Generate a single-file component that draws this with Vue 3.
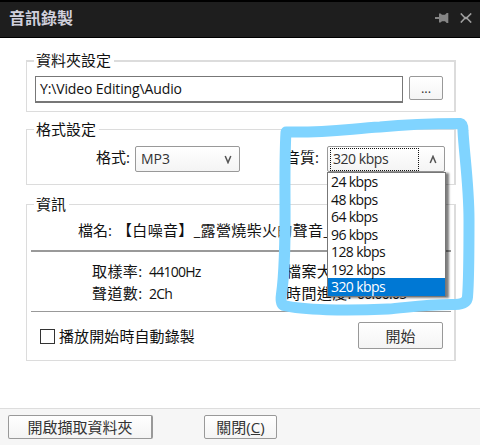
<script setup>
import { ref } from 'vue'

const rates = ['24 kbps', '48 kbps', '64 kbps', '96 kbps', '128 kbps', '192 kbps', '320 kbps']
const selected = ref('320 kbps')
const autoRecord = ref(false)
</script>

<template>
  <div class="window">
    <header class="titlebar">
      <h1>音訊錄製</h1>
      <svg class="pin" width="14" height="12" viewBox="0 0 14 12">
        <path d="M0 5H4V1.500H5.500L7 2.800H10L11.700 1H13.300V11H11.700L10 9.200H7L5.500 10.500H4V7H0z" fill="#858585" />
      </svg>
      <svg class="close" width="12" height="10" viewBox="0 0 12 10">
        <path d="M.8 .4L4.6 4.4H7.2L11.2 .4M.8 9.6L4.6 5.4H7.2L11.2 9.6" fill="none" stroke="#a0a0a0" stroke-width="1.5" />
      </svg>
    </header>

    <main class="body">
      <section class="group folder">
        <h2><span>資料夾設定</span></h2>
        <div class="folder-row">
          <div class="path"><span class="latin">Y:\Video Editing\Audio</span></div>
          <button class="btn browse">...</button>
        </div>
      </section>

      <section class="group format">
        <h2><span>格式設定</span></h2>
        <div class="format-row">
          <label class="flabel">格式:</label>
          <div class="btn select">
            <span>MP3</span>
            <svg width="8" height="9" viewBox="0 0 8 9"><path d="M1.2 1L4 7.6L6.8 1" fill="none" stroke="#555" stroke-width="1.5" /></svg>
          </div>
          <label class="qlabel">音質:</label>
          <div class="btn select quality">
            <span class="focus">{{ selected }}</span>
            <svg width="8" height="9" viewBox="0 0 8 9"><path d="M1.2 8L4 1.4L6.8 8" fill="none" stroke="#555" stroke-width="1.5" /></svg>
            <ul class="popup">
              <li v-for="r in rates" :key="r" :class="{ on: r === selected }">{{ r }}</li>
            </ul>
          </div>
        </div>
      </section>

      <section class="group info">
        <h2><span>資訊</span></h2>
        <div class="file"><span>檔名:</span><span class="name">【白噪音】_露營燒柴火的聲音_</span></div>
        <div class="stats">
          <span class="key">取樣率:</span><span class="val">44100Hz</span>
          <span class="key">檔案大小:</span><span class="val"></span>
          <span class="key">聲道數:</span><span class="val">2Ch</span>
          <span class="key">時間進度:</span><span class="val">00:00:05</span>
        </div>
        <div class="start-row">
          <span class="check" :class="{ ticked: autoRecord }"></span>
          <span class="check-text">播放開始時自動錄製</span>
          <button class="btn start">開始</button>
        </div>
      </section>
    </main>

    <footer class="footer">
      <button class="btn open">開啟擷取資料夾</button>
      <button class="btn shut">關閉(<u>C</u>)</button>
    </footer>

    <svg class="marker" width="480" height="445" viewBox="0 0 480 445">
      <path d="M286 132C325 133 348 129 380 127C410 124 440 123.500 460 123.500Q463 124 463 131C464 152 469 185 469 220C469 250 469 280 467.500 297Q467 304 455 304.500C425 304 405 308 388 309C345 311 302 310 284 305.500Q280 304 281.500 294C288 250 283 180 286 132z" />
    </svg>
  </div>
</template>

<style>
body { margin: 0; background: #fff; overflow: hidden; }
</style>

<style scoped>
* { box-sizing: border-box; }
.window {
  position: relative;
  display: flex;
  flex-direction: column;
  width: 480px;
  height: 445px;
  background: #fff;
  color: #111;
  font: 15px/20px "Open Sans", "Noto Sans CJK TC", sans-serif;
  white-space: nowrap;
}
h1, h2, ul { margin: 0; padding: 0; font-weight: 400; list-style: none; }
.titlebar {
  display: flex;
  align-items: center;
  height: 38px;
  padding: 0 8px 3px 9px;
  background: #1e1e1e;
  border-top: 2px solid #000;
  border-bottom: 1px solid #000;
}
h1 { flex: 1; font-size: 16px; line-height: 20px; font-weight: 700; color: #d0d0dc; }
.pin { margin-right: 11px; }
.body { flex: 1; padding: 22px 24px 0 26px; }
.group { border: 1px solid #dcdcdc; border-right-width: 2px; }
h2 { height: 20px; margin-top: -11px; padding-left: 7px; font-size: 15px; line-height: 20px; }
h2 span { display: inline-block; padding: 0 3px 0 2px; background: #fff; }
.folder { height: 52px; border-top-width: 2px; }
.folder h2 { line-height: 18px; }
.folder-row { display: flex; padding: 5px 11px 0 8px; }
.path {
  width: 369px;
  height: 27px;
  padding: 0 4px;
  line-height: 23px;
  border: 1px solid #777;
  border-bottom-width: 2px;
  margin-right: 6px;
}
.latin { font-size: 14px; letter-spacing: -0.130px; }
.btn {
  display: block;
  padding: 0;
  font: inherit;
  color: #333;
  text-align: center;
  background: linear-gradient(#fff, #f4f4f4);
  border: 1px solid #999;
  border-radius: 2px;
}
.browse { width: 34px; height: 24px; line-height: 20px; font-size: 13px; }
.format { height: 56px; margin-top: 17px; }
.format-row { display: flex; padding: 7px 0 0 69px; }
.flabel { width: 39px; line-height: 23px; }
.qlabel { width: 43px; margin-left: 44px; padding-left: 1px; line-height: 23px; }
.select {
  position: relative;
  display: flex;
  align-items: center;
  justify-content: space-between;
  width: 105px;
  height: 26px;
  padding: 0 7px 0 5px;
  font-size: 14px;
}
.quality { width: 118px; padding: 0 7px 0 2px; letter-spacing: -0.600px; }
.focus { width: 89px; height: 23px; padding-left: 2px; line-height: 20px; text-align: left; border: 1px dotted #111; letter-spacing: -0.450px; }
.popup {
  position: absolute;
  z-index: 2;
  top: 25px;
  left: -1px;
  width: 119px;
  height: 125px;
  background: #fff;
  border: 1px solid #777;
  box-shadow: 3px 1px 2px rgba(0, 0, 0, 0.5);
  text-align: left;
  color: #111;
}
.popup li { height: 17.570px; padding-left: 3px; font-size: 14px; line-height: 18px; }
.popup .on { background: #0078d4; color: #fff; }
.info { height: 157px; margin-top: 19px; }
.file { display: flex; gap: 5px; height: 38px; margin: 0 3px 0 4px; padding: 6px 0 0 47px; border-bottom: 2px solid #999; }
.name { letter-spacing: 0.350px; }
.stats {
  display: grid;
  grid-template-columns: 57px 137px 71px auto;
  grid-auto-rows: 22px;
  height: 60px;
  margin: 0 3px 0 4px;
  padding: 8px 0 0 61px;
  line-height: 22px;
  border-bottom: 1px solid #999;
  font-size: 15px;
}
.key { letter-spacing: 0.400px; }
.val { padding-top: 1px; font-size: 14px; letter-spacing: -0.750px; }
.start-row { display: flex; align-items: center; margin-top: 10px; padding: 0 11px 0 13px; }
.check { width: 15px; height: 15px; margin: 2px 4px 0 0; border: 1px solid #333; }
.ticked { background: #0078d4; }
.check-text { flex: 1; padding-top: 1px; letter-spacing: 0.100px; }
.start { width: 85px; height: 27px; line-height: 24px; }
.footer { display: flex; gap: 51px; height: 37px; padding: 6px 8px 0; background: #f6f6f6; border-top: 1px solid #ddd; }
.footer .btn { height: 24px; line-height: 21px; }
.footer .open { width: 145px; border-right-width: 2px; }
.shut { width: 73px; }
.marker { position: absolute; z-index: 3; inset: 0; pointer-events: none; }
.marker path { fill: none; stroke: #80d4ff; stroke-width: 11px; stroke-linejoin: round; }
</style>
